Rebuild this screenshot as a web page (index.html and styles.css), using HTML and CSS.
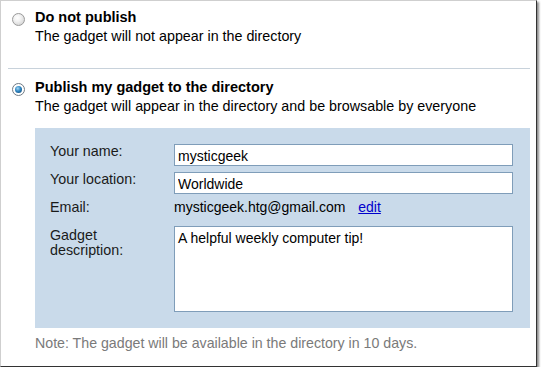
FILE: index.html
```html
<!DOCTYPE html>
<html lang="en">

<head>
    <meta charset="UTF-8">
    <title>Publish gadget</title>
    <link rel="stylesheet" href="styles.css">
</head>

<body>
    <div class="frame">
        <!-- Option 1 -->
        <div class="option">
            <span class="radio"></span>
            <div class="option-body">
                <div class="title">Do not publish</div>
                <div class="desc">The gadget will not appear in the directory</div>
            </div>
        </div>

        <div class="separator"></div>

        <!-- Option 2 -->
        <div class="option">
            <span class="radio checked"></span>
            <div class="option-body">
                <div class="title">Publish my gadget to the directory</div>
                <div class="desc">The gadget will appear in the directory and be browsable by everyone</div>

                <div class="panel">
                    <label class="label" for="name">Your name:</label>
                    <input class="field" id="name" type="text" value="mysticgeek">

                    <label class="label" for="location">Your location:</label>
                    <input class="field" id="location" type="text" value="Worldwide">

                    <div class="label">Email:</div>
                    <div class="email">mysticgeek.htg@gmail.com <a href="#edit">edit</a></div>

                    <label class="label label-multi" for="description">Gadget<br>description:</label>
                    <textarea class="field area" id="description">A helpful weekly computer tip!</textarea>
                </div>

                <p class="note">Note: The gadget will be available in the directory in 10 days.</p>
            </div>
        </div>
    </div>
</body>

</html>
```

FILE: styles.css
```css
body {
    margin: 0;
    background-color: #fff;
    font-family: "Liberation Sans", Arial, sans-serif;
    font-size: 14px;
    color: #000;
}

.frame {
    box-sizing: border-box;
    width: 537px;
    height: 367px;
    border-left: 1px solid #cfcfcf;
    border-top: 1px solid #cfcfcf;
    border-right: 1px solid #333;
    border-bottom: 1px solid #333;
    box-shadow: 2px 2px 2px rgba(0, 0, 0, 0.45);
    padding-top: 7px;
}

/* Radio options */
.option {
    display: flex;
    gap: 10px;
    padding: 0 6px 0 11px;
}

.radio {
    position: relative;
    flex-shrink: 0;
    box-sizing: border-box;
    width: 13px;
    height: 13px;
    margin-top: 5px;
    border-radius: 50%;
    border: 1px solid #9a9a9a;
    background: radial-gradient(circle at 40% 35%, #fff 0, #f2f2f2 35%, #c9c9c9 100%);
}

.radio.checked {
    border-color: #6f7a84;
    background: #fff;
}

.radio.checked::after {
    content: '';
    position: absolute;
    left: 2px;
    top: 2px;
    width: 7px;
    height: 7px;
    border-radius: 50%;
    background: radial-gradient(circle at 40% 35%, #a6d8f5 0, #2f86c2 45%, #0d3f6b 100%);
}

.option-body {
    flex: 1;
}

.title {
    font-weight: bold;
    font-size: 14.5px;
    line-height: 19px;
}

.desc {
    font-size: 14.3px;
    line-height: 19px;
}

.separator {
    height: 1px;
    background-color: #c8d2db;
    margin: 22px 6px 9px 7px;
}

/* Details panel */
.panel {
    display: grid;
    grid-template-columns: 124px 339px;
    grid-template-rows: 22px 22px 20px 86px;
    row-gap: 6px;
    margin-top: 12px;
    padding: 16px 16px 16px 15px;
    background-color: #c9daea;
}

.label {
    font-size: 14.3px;
    line-height: 15px;
    color: #1a1a1a;
}

.label-multi {
    padding-top: 2px;
}

.field {
    box-sizing: border-box;
    width: 339px;
    height: 22px;
    margin: 0;
    padding: 2px 3px 0;
    border: 1px solid #7f9db9;
    font-family: "Liberation Sans", Arial, sans-serif;
    font-size: 14px;
    color: #000;
    background-color: #fff;
    outline: none;
}

.area {
    height: 86px;
    resize: none;
    line-height: 16px;
    padding-top: 3px;
}

.email {
    line-height: 15px;
}

.email a {
    margin-left: 9px;
    color: #0000cc;
}

.note {
    margin: 6px 0 0;
    font-size: 14.2px;
    line-height: 19px;
    color: #7a7a7a;
}
```
